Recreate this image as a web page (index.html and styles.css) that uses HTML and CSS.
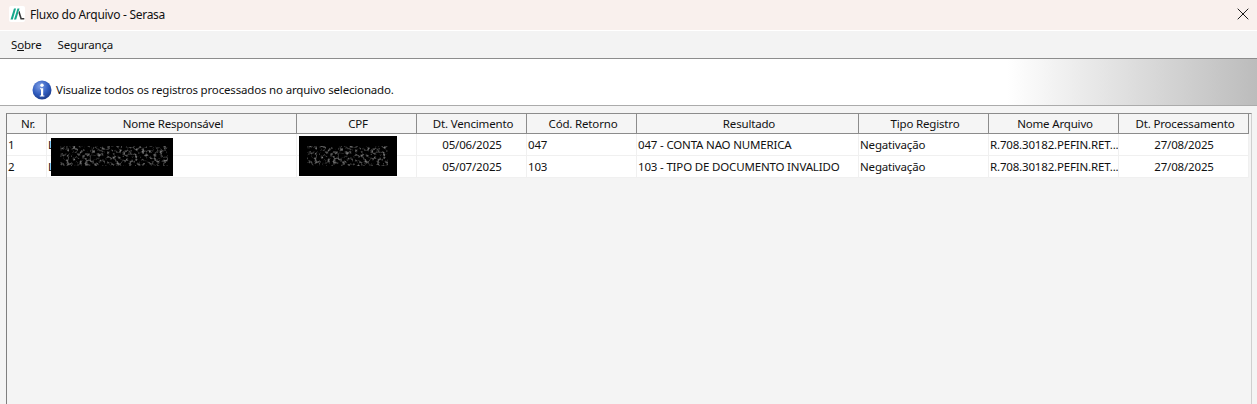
FILE: index.html
```html
<!DOCTYPE html>
<html lang="pt">
<head>
<meta charset="utf-8">
<title>Fluxo do Arquivo - Serasa</title>
<link rel="stylesheet" href="styles.css">
</head>
<body>
<div class="window">
  <header class="titlebar">
    <span class="app-icon">
      <svg width="16" height="16" viewBox="0 0 16 16"><path d="M1.5 13.5 5 2.5H7L3.8 13.5Z" fill="#17a88c"/><path d="M5 13.5 8.5 2.5h2L7.2 13.5Z" fill="#17a88c"/><path d="M10.4 4.5 12.7 12h2.6v1.5H11.5L9.5 7Z" fill="#3a3a3a"/></svg>
    </span>
    <span class="title">Fluxo do Arquivo - Serasa</span>
    <svg class="close" width="12" height="12" viewBox="0 0 12 12"><path d="M.7.7 11.3 11.3M11.3.7.7 11.3" stroke="#1a1a1a" stroke-width="1"/></svg>
  </header>
  <nav class="menubar">
    <span class="menu-item">S<u>o</u>bre</span>
    <span class="menu-item">Segurança</span>
  </nav>
  <section class="banner">
    <svg class="info" width="20" height="20" viewBox="0 0 20 20">
      <defs><radialGradient id="ig" cx=".4" cy=".3" r=".8"><stop offset="0" stop-color="#7f9fe6"/><stop offset=".55" stop-color="#2f5bbd"/><stop offset="1" stop-color="#16337f"/></radialGradient></defs>
      <circle cx="10" cy="10" r="9.5" fill="url(#ig)"/>
      <circle cx="10" cy="5.2" r="1.7" fill="#fff"/>
      <path d="M8 8.2h3.2v7.2H12.4v1H7.8v-1H9V9.2H8Z" fill="#fff"/>
    </svg>
    <span class="banner-text">Visualize todos os registros processados no arquivo selecionado.</span>
  </section>
  <main class="content">
    <div class="grid">
      <div class="row head">
        <div class="cell">Nr.</div><div class="cell">Nome Responsável</div><div class="cell">CPF</div><div class="cell">Dt. Vencimento</div><div class="cell">Cód. Retorno</div><div class="cell">Resultado</div><div class="cell">Tipo Registro</div><div class="cell">Nome Arquivo</div><div class="cell">Dt. Processamento</div>
      </div>
      <div class="row">
        <div class="cell">1</div><div class="cell">L</div><div class="cell"></div><div class="cell center">05/06/2025</div><div class="cell">047</div><div class="cell">047 - CONTA NAO NUMERICA</div><div class="cell">Negativação</div><div class="cell">R.708.30182.PEFIN.RET...</div><div class="cell center">27/08/2025</div>
      </div>
      <div class="row">
        <div class="cell">2</div><div class="cell">L</div><div class="cell"></div><div class="cell center">05/07/2025</div><div class="cell">103</div><div class="cell">103 - TIPO DE DOCUMENTO INVALIDO</div><div class="cell">Negativação</div><div class="cell">R.708.30182.PEFIN.RET...</div><div class="cell center">27/08/2025</div>
      </div>
      <svg class="redact redact-name" width="122" height="38"><defs><filter id="nz" x="0" y="0" width="100%" height="100%"><feTurbulence type="fractalNoise" baseFrequency=".32" numOctaves="2" seed="7"/><feColorMatrix values="0 0 0 0 1  0 0 0 0 1  0 0 0 0 1  3 0 0 0 -1.45"/></filter></defs><rect width="122" height="38" fill="#000"/><rect x="9" y="8" width="108" height="20" filter="url(#nz)" opacity=".5"/></svg>
      <svg class="redact redact-cpf" width="98" height="40"><rect width="98" height="40" fill="#000"/><rect x="8" y="10" width="81" height="20" filter="url(#nz)" opacity=".5"/></svg>
    </div>
  </main>
</div>
</body>
</html>
```
FILE: styles.css
```css
* { box-sizing: border-box; }
html, body { margin: 0; height: 100%; overflow: hidden; }
body { font-family: "Noto Sans", "Open Sans", sans-serif; font-size: 11.5px; letter-spacing: -.17px; color: #111; background: #f3f3f3; }
.window { display: flex; flex-direction: column; height: 404px; }
.titlebar { height: 31px; flex: none; display: flex; align-items: center; padding: 0 9px 2px 9px; background: #f9f0ed; border-bottom: 1px solid #fff; }
.app-icon { width: 16px; height: 16px; background: #fff; border-radius: 2px; display: flex; margin-right: 5px; }
.title { flex: 1; font-size: 12px; letter-spacing: -.28px; }
.close { margin-right: -1px; }
.menubar { height: 28px; flex: none; display: flex; align-items: center; gap: 16px; padding: 0 0 0 11px; background: #f3f3f3; border-bottom: 1px solid #8c8c8c; }
.banner { height: 47px; flex: none; display: flex; align-items: center; padding: 15px 0 0 32px; gap: 4px; border-bottom: 1px solid #ababab; background: linear-gradient(90deg, #fff 0, #fff 1007px, #bcbcbc 1257px); }
.info { flex: none; }
.content { flex: 1; padding: 7px 5px 0 6px; background: #f4f4f4; }
.grid { position: relative; height: 100%; width: 1246px; border-top: 1px solid #8c8c8c; border-right: 1px solid #cfcfcf; border-left: 1px solid #7f7f7f; }
.row { display: grid; grid-template-columns: 40px 250px 120px 110px 110px 222px 130px 130px 130px; height: 22px; background: #fff; width: 1242px; border-bottom: 1px solid #f0f0f0; }
.row.head { height: 20px; background: #f5f5f5; border-bottom: 1px solid #8c8c8c; }
.cell { padding: 0 0 0 1px; line-height: 21px; white-space: nowrap; overflow: hidden; border-right: 1px solid #f0f0f0; }
.row.head .cell { padding: 0 0 0 3px; text-align: center; line-height: 20px; border-right: 1px solid #8c8c8c; background: #f5f5f5; }
.center { text-align: center; }
.redact { position: absolute; display: block; }
.redact-name { left: 44px; top: 24px; }
.redact-cpf { left: 292px; top: 22px; }
```
